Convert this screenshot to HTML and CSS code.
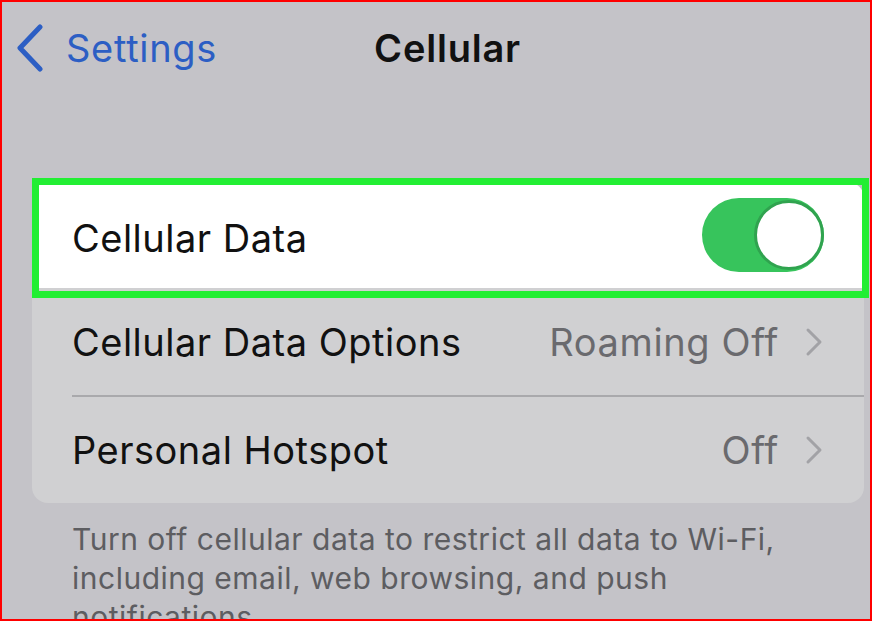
FILE: index.html
```html
<!DOCTYPE html>
<html lang="en">
<head>
<meta charset="utf-8">
<title>Cellular</title>
<link rel="stylesheet" href="styles.css">
</head>
<body>
<div class="frame">
  <header class="nav">
    <a class="back">
      <svg class="back-chevron" width="28" height="48" viewBox="0 0 28 48" aria-hidden="true">
        <path d="M24 3 L4 24 L24 45" fill="none" stroke="#2c5ec4" stroke-width="5" stroke-linecap="round" stroke-linejoin="round"/>
      </svg>
      <span class="back-label">Settings</span>
    </a>
    <h1 class="title">Cellular</h1>
  </header>

  <section class="card">
    <div class="row row-highlight">
      <span class="row-label">Cellular Data</span>
      <span class="toggle"><span class="knob"></span></span>
    </div>
    <div class="row">
      <span class="row-label">Cellular Data Options</span>
      <span class="row-value">Roaming Off</span>
      <svg class="chevron" width="18" height="30" viewBox="0 0 18 30" aria-hidden="true">
        <path d="M3 3 L15 15 L3 27" fill="none" stroke="#a2a2a6" stroke-width="3" stroke-linecap="round" stroke-linejoin="round"/>
      </svg>
    </div>
    <div class="divider"></div>
    <div class="row">
      <span class="row-label">Personal Hotspot</span>
      <span class="row-value">Off</span>
      <svg class="chevron" width="18" height="30" viewBox="0 0 18 30" aria-hidden="true">
        <path d="M3 3 L15 15 L3 27" fill="none" stroke="#a2a2a6" stroke-width="3" stroke-linecap="round" stroke-linejoin="round"/>
      </svg>
    </div>
  </section>

  <p class="footnote">Turn off cellular data to restrict all data to Wi-Fi, including email, web browsing, and push notifications.</p>
</div>
</body>
</html>
```

FILE: styles.css
```css
html, body {
  margin: 0;
  padding: 0;
}

body {
  background: #c4c3c8;
  font-family: Inter, "Noto Sans", "Liberation Sans", sans-serif;
}

.frame {
  box-sizing: border-box;
  width: 872px;
  height: 621px;
  border: 2px solid #ff0000;
  background: #c4c3c8;
  overflow: hidden;
}

.nav {
  height: 92px;
  display: flex;
  align-items: center;
  padding-left: 14px;
}

.back {
  display: flex;
  align-items: center;
  gap: 22px;
  color: #2c5ec4;
}

.back-chevron {
  display: block;
}

.back-label {
  font-size: 38px;
  letter-spacing: 0.7px;
}

.title {
  margin: 0 0 0 157px;
  font-size: 38px;
  font-weight: 600;
  color: #111111;
  letter-spacing: 0.8px;
}

.card {
  margin: 88px 6px 0 30px;
  background: #d0d0d2;
  border-radius: 16px;
}

.row {
  height: 106px;
  display: flex;
  align-items: center;
  padding: 0 41px 0 40px;
  font-size: 38px;
  color: #111111;
}

.row + .row {
  height: 107px;
}

.divider + .row {
  height: 106px;
}

.row-highlight {
  position: relative;
  background: #ffffff;
  border-radius: 16px 16px 0 0;
  padding-right: 40px;
}

.row-highlight .row-label {
  padding-top: 5px;
}

.row-highlight::after {
  content: "";
  position: absolute;
  top: -4px;
  left: 0;
  right: -5px;
  bottom: -10px;
  border: 7px solid #22ee33;
}

.row-label {
  flex: 1;
  letter-spacing: 0.5px;
}

.row-value {
  color: #6a6a6e;
  letter-spacing: 0.6px;
  margin-right: 26px;
}

.chevron {
  display: block;
}

.divider {
  height: 2px;
  margin-left: 40px;
  background: #a9a9ac;
}

.toggle {
  position: relative;
  width: 122px;
  height: 74px;
  border-radius: 37px;
  background: #37c45c;
}

.knob {
  position: absolute;
  top: 2px;
  right: 0;
  box-sizing: border-box;
  width: 70px;
  height: 70px;
  border-radius: 50%;
  background: #ffffff;
  border: 3px solid #30a34f;
}

.footnote {
  margin: 17px 0 0 70px;
  width: 740px;
  font-size: 30px;
  line-height: 39px;
  color: #5d5d61;
  letter-spacing: 0.5px;
}
```
